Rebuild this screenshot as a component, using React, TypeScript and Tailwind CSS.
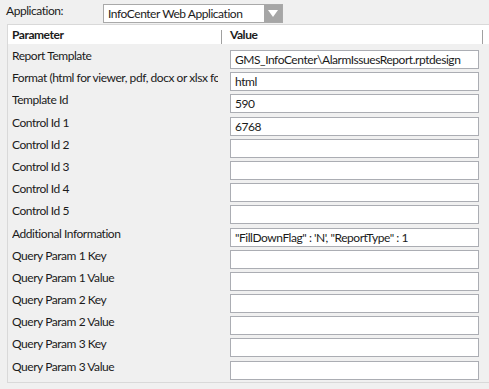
const rows: { label: string; value: string }[] = [
  { label: "Report Template", value: "GMS_InfoCenter\\AlarmIssuesReport.rptdesign" },
  { label: "Format (html for viewer, pdf, docx or xlsx format)", value: "html" },
  { label: "Template Id", value: "590" },
  { label: "Control Id 1", value: "6768" },
  { label: "Control Id 2", value: "" },
  { label: "Control Id 3", value: "" },
  { label: "Control Id 4", value: "" },
  { label: "Control Id 5", value: "" },
  { label: "Additional Information", value: "\"FillDownFlag\" : 'N', \"ReportType\" : 1" },
  { label: "Query Param 1 Key", value: "" },
  { label: "Query Param 1 Value", value: "" },
  { label: "Query Param 2 Key", value: "" },
  { label: "Query Param 2 Value", value: "" },
  { label: "Query Param 3 Key", value: "" },
  { label: "Query Param 3 Value", value: "" },
];

const App = () => {
  return (
    <div
      className="w-[489px] h-[389px] overflow-hidden bg-[#f0f0f0] text-[12px] tracking-[-0.45px] text-[#1b1b1b]"
      style={{ fontFamily: "Lato, 'Liberation Sans', sans-serif" }}
    >
      {/* application picker */}
      <div className="h-[24px] flex items-start">
        <div className="w-[103px] pl-[6px] pt-[3px] leading-[16px]">Application:</div>
        <div className="mt-[4px] w-[180px] h-[19px] border border-[#a9a9a9] bg-white flex">
          <div className="flex-1 pl-[4px] leading-[17px]">InfoCenter Web Application</div>
          <div className="w-[18px] h-full bg-[#a6a6a6] flex items-center justify-center">
            <svg width="10" height="7" viewBox="0 0 10 7">
              <path d="M0 0 H10 L5 7 Z" fill="#ffffff" />
            </svg>
          </div>
        </div>
      </div>

      {/* parameter grid */}
      <div className="ml-[7px] w-[484px] h-[359px] border border-[#d9d9d9]">
        <div className="h-[19px] bg-white flex items-end font-bold">
          <div className="w-[213px] pl-[4px] self-center leading-[16px]">Parameter</div>
          <div className="w-px h-[14px] bg-[#a0a0a0]" />
          <div className="w-[260px] pl-[8px] self-center leading-[16px]">Value</div>
          <div className="w-px h-[14px] bg-[#a0a0a0]" />
        </div>
        <div className="pt-[4px]">
          {rows.map((r) => (
            <div key={r.label} className="h-[22.2px] flex">
              <div className="w-[206px] ml-[4px] mr-[8px] leading-[16px] whitespace-nowrap overflow-hidden">
                {r.label}
              </div>
              <div className="pl-[4px] pt-[2px]">
                <div className="w-[249px] h-[19px] border border-[#abadb3] bg-white pl-[4px] leading-[17px] whitespace-nowrap overflow-hidden">
                  {r.value}
                </div>
              </div>
            </div>
          ))}
        </div>
      </div>
    </div>
  );
};

export default App;
